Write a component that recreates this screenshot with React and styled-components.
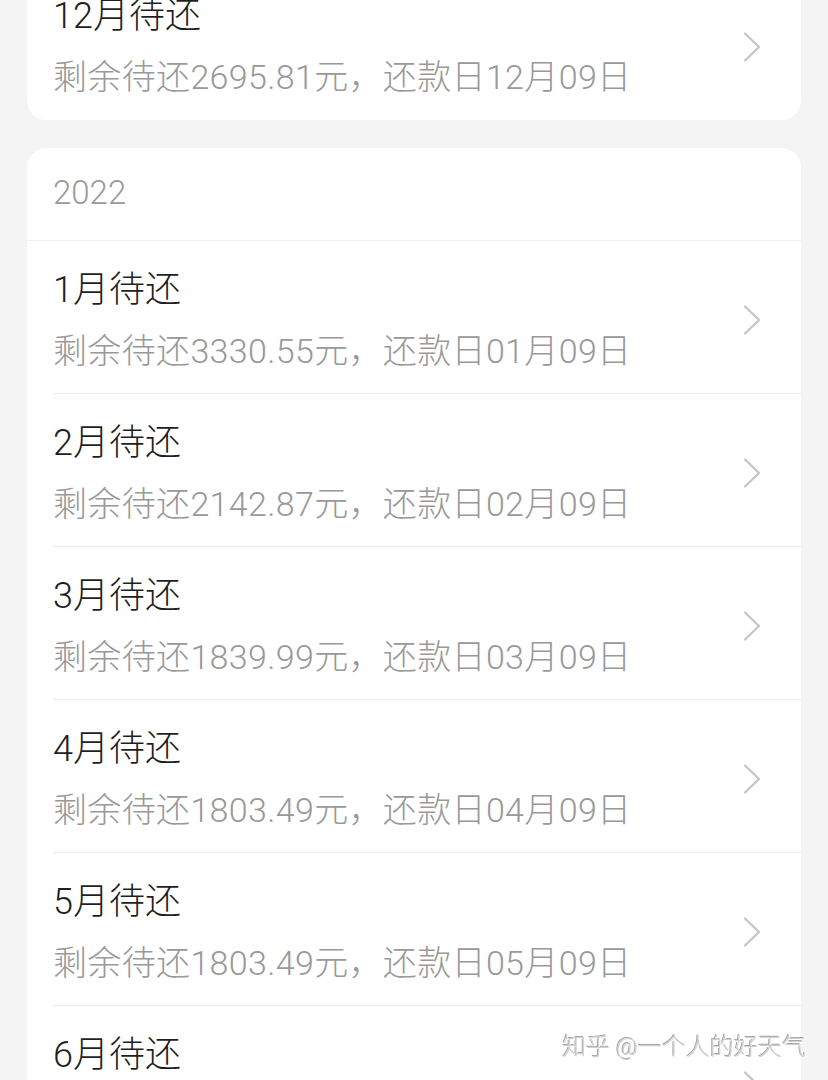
import React from "react";
import styled, { createGlobalStyle } from "styled-components";

const GlobalStyle = createGlobalStyle`
  html, body {
    margin: 0;
    padding: 0;
    background: #f4f4f4;
    overflow: hidden;
    font-family: Roboto, "Noto Sans CJK SC", sans-serif;
  }
`;

const lastYear = [{ month: 12, left: "2695.81", due: "12月09日" }];

const thisYear = [
  { month: 1, left: "3330.55", due: "01月09日" },
  { month: 2, left: "2142.87", due: "02月09日" },
  { month: 3, left: "1839.99", due: "03月09日" },
  { month: 4, left: "1803.49", due: "04月09日" },
  { month: 5, left: "1803.49", due: "05月09日" },
  { month: 6, left: "1803.49", due: "06月09日" },
];

function Chevron() {
  return (
    <svg width="18" height="30" viewBox="0 0 18 30" fill="none">
      <polyline
        points="2,1.5 16,15 2,28.5"
        stroke="#c6c6c6"
        strokeWidth="2.4"
        strokeLinecap="round"
        strokeLinejoin="round"
      />
    </svg>
  );
}

function BillRow({ bill, last }) {
  return (
    <Row last={last}>
      <Texts>
        <Title>{bill.month}月待还</Title>
        <Sub>
          剩余待还{bill.left}元，还款日{bill.due}
        </Sub>
      </Texts>
      <Chevron />
    </Row>
  );
}

export default function App() {
  return (
    <Page>
      <GlobalStyle />
      <Card top>
        {lastYear.map((b, i) => (
          <BillRow key={b.month} bill={b} last={i === lastYear.length - 1} />
        ))}
      </Card>
      <Card>
        <Header>2022</Header>
        {thisYear.map((b, i) => (
          <BillRow key={b.month} bill={b} last={i === thisYear.length - 1} />
        ))}
      </Card>
      <Watermark>知乎 @一个人的好天气</Watermark>
    </Page>
  );
}

const Page = styled.div`
  display: flex;
  flex-direction: column;
  gap: 28px;
  padding: 0 27px;
  height: 1080px;
`;

const Card = styled.div`
  background: #fff;
  border-radius: 20px;
  margin-top: ${(p) => (p.top ? "-33px" : "0")};
  flex-shrink: 0;
`;

const Header = styled.div`
  height: 93px;
  box-sizing: border-box;
  padding: 0 26px 4px;
  display: flex;
  align-items: center;
  font-size: 33px;
  font-weight: 300;
  color: #9b9b9b;
  border-bottom: 1px solid #efefef;
`;

const Row = styled.div`
  height: 153px;
  box-sizing: border-box;
  margin-left: 26px;
  padding: 6px 40px 0 0;
  display: flex;
  align-items: center;
  justify-content: space-between;
  border-bottom: ${(p) => (p.last ? "none" : "1px solid #ececec")};
`;

const Texts = styled.div`
  display: flex;
  flex-direction: column;
  gap: 17px;
`;

const Title = styled.div`
  font-size: 36px;
  line-height: 44px;
  font-weight: 300;
  color: #1f1f1f;
`;

const Sub = styled.div`
  font-size: 34px;
  line-height: 44px;
  font-weight: 300;
  letter-spacing: 0.35px;
  color: #999999;
`;

const Watermark = styled.div`
  position: fixed;
  right: 22px;
  top: 1031px;
  font-size: 24px;
  line-height: 32px;
  font-weight: 300;
  color: #cfcfcf;
  text-shadow: 1px 1px 0 #ffffff, -1px -1px 0 #a8a8a8;
`;
